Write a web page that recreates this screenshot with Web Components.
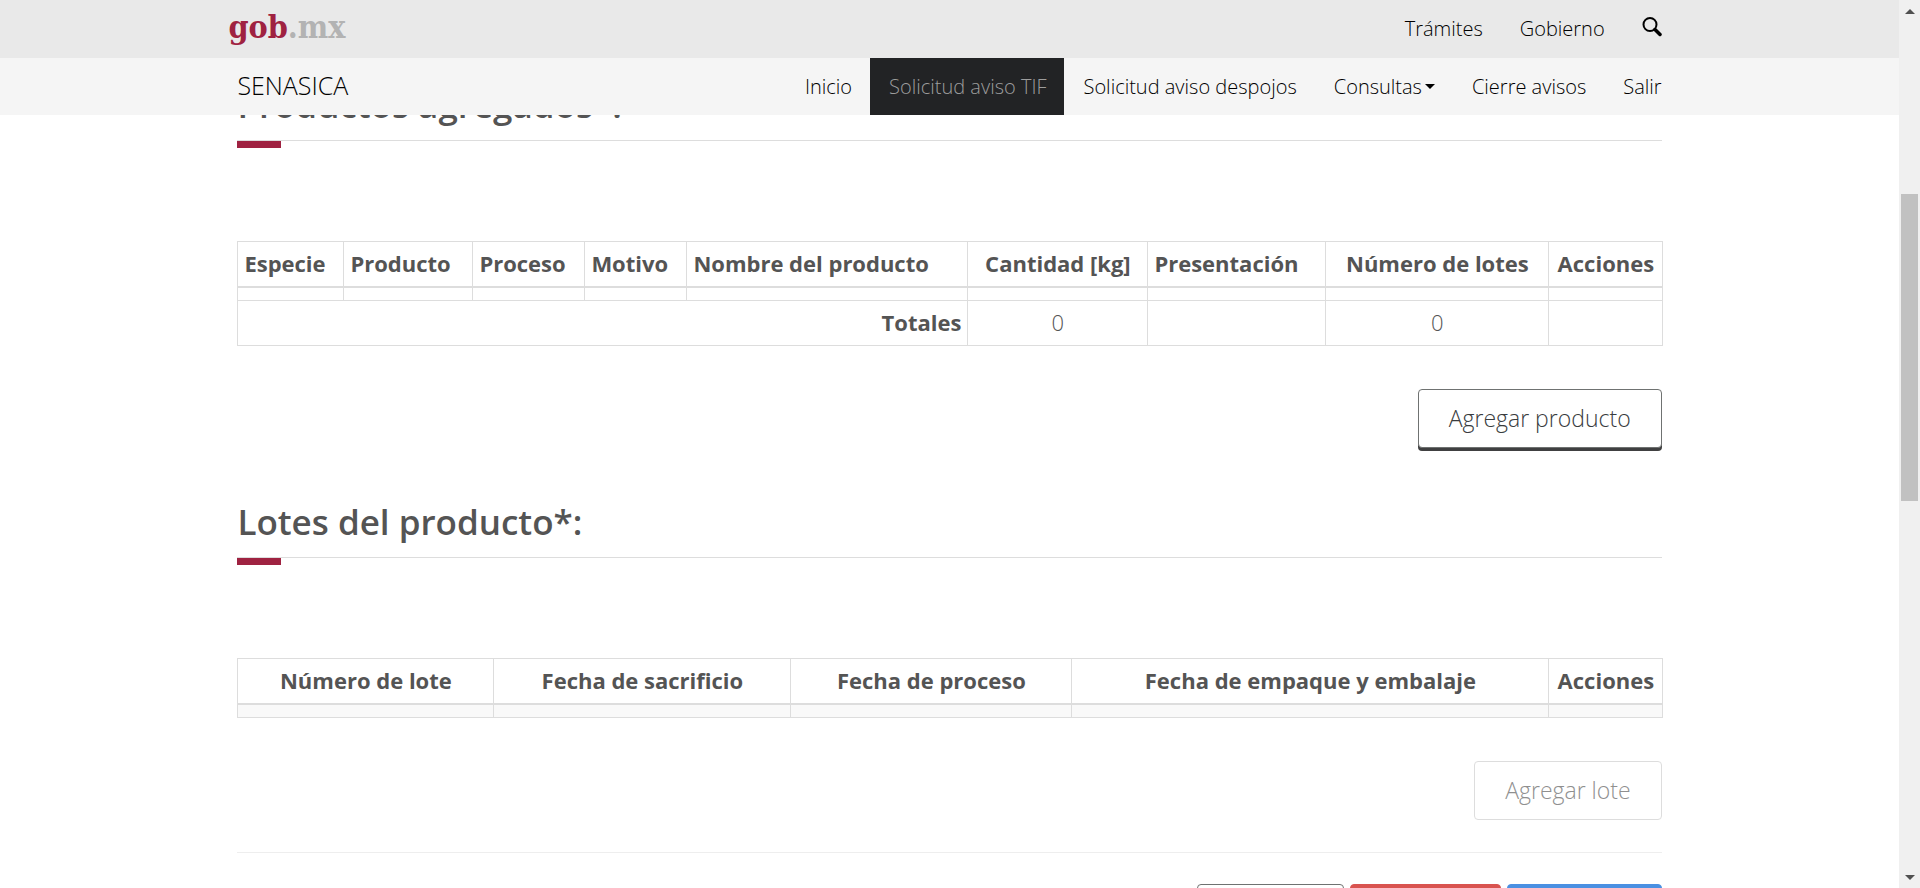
<!DOCTYPE html>
<html lang="es">
<head>
<meta charset="utf-8">
<title>SENASICA - Solicitud aviso TIF</title>
<style>
  html, body { margin: 0; height: 100%; overflow: hidden; }
  body { font-family: "Open Sans", sans-serif; font-weight: 300; font-size: 22px; line-height: 32px; color: #545454; background: #fff; }
</style>
</head>
<body>
<tif-app></tif-app>
<script>
const define = (name, html, connected) => {
  const template = document.createElement('template');
  template.innerHTML = html;
  customElements.define(name, class extends HTMLElement {
    constructor() {
      super();
      this.attachShadow({ mode: 'open' }).appendChild(template.content.cloneNode(true));
    }
    connectedCallback() {
      if (connected) connected(this, this.shadowRoot);
    }
  });
};

/* Centred column shared by the bars and the content */
define('tif-container', `
<style>
  :host { display: block; box-sizing: border-box; width: 75%; min-width: 1200px; max-width: 1425px; margin: 0 auto; }
</style>
<slot></slot>`);

define('gob-bar', `
<style>
  :host { display: block; background: #e9e9e9; color: #000; font-size: 20px; }
  .row { display: flex; align-items: center; justify-content: space-between; height: 58px; }
  a { color: inherit; text-decoration: none; }
  .logo { font: bold 32px/40px "DejaVu Serif Condensed", "DejaVu Serif", serif; color: #b3b3b3; margin-left: -9px; padding-bottom: 4px; }
  .logo b { color: #9f2241; }
  nav { display: flex; align-items: center; gap: 37px; }
  svg { display: block; width: 20px; height: 20px; margin-bottom: 4px; }
</style>
<tif-container><div class="row">
  <a class="logo" href="#"><b>gob</b>.mx</a>
  <nav>
    <a href="#">Trámites</a>
    <a href="#">Gobierno</a>
    <a href="#" aria-label="Buscar"><svg viewBox="0 0 20 20" fill="none" stroke="#000"><circle cx="8" cy="7.500" r="6.500" stroke-width="2"/><path d="M13 12.500 18 17.500" stroke-width="3.500" stroke-linecap="round"/></svg></a>
  </nav>
</div></tif-container>`);

define('nav-item', `
<style>
  :host { display: block; }
  a { display: flex; align-items: center; height: 57px; padding: 0 18px 0 19px; color: #000; text-decoration: none; }
  :host([active]) a { background: #222325; color: #9d9d9d; }
  i { display: none; margin-left: 3px; border: 5px solid transparent; border-top-color: #000; border-bottom: 0; }
  :host([dropdown]) i { display: block; }
</style>
<a href="#"><slot></slot><i></i></a>`);

define('tif-nav', `
<style>
  :host { display: block; background: #f5f5f5; color: #000; font-size: 20px; }
  .row { display: flex; align-items: center; justify-content: space-between; height: 57px; }
  .brand { font-size: 25px; padding-bottom: 4px; color: inherit; text-decoration: none; }
  nav { display: flex; margin-right: -18px; }
</style>
<tif-container><div class="row">
  <a class="brand" href="#">SENASICA</a>
  <nav>
    <nav-item>Inicio</nav-item>
    <nav-item active>Solicitud aviso TIF</nav-item>
    <nav-item>Solicitud aviso despojos</nav-item>
    <nav-item dropdown>Consultas</nav-item>
    <nav-item>Cierre avisos</nav-item>
    <nav-item>Salir</nav-item>
  </nav>
</div></tif-container>`);

define('section-title', `
<style>
  :host { display: block; }
  h3 { margin: 0; padding-bottom: 15px; border-bottom: 1px solid #ddd; font-size: 35px; line-height: 40px; font-weight: 600; }
  div { width: 44px; height: 7px; background: #9f2241; }
</style>
<h3><slot></slot></h3><div></div>`);

define('tif-button', `
<style>
  :host { display: block; }
  button { display: block; box-sizing: border-box; width: 100%; min-height: 59px; padding: 0 30px 2px; border: 1px solid #6f7271; border-radius: 4px; background: #fff; color: #393c3e; font: inherit; font-size: 23px; line-height: 32px; box-shadow: 0 3px 0 #404041; }
  button:disabled { opacity: .65; border-color: #ccc; color: #545454; box-shadow: none; }
  :host([kind=danger]) button { background: #d9534f; border-color: #d9534f; box-shadow: none; }
  :host([kind=primary]) button { background: #4a90e2; border-color: #4a90e2; box-shadow: none; }
</style>
<button type="button"><slot></slot></button>`, (host, root) => {
  const button = root.querySelector('button');
  button.disabled = host.hasAttribute('disabled');
  if (host.hasAttribute('label')) button.setAttribute('aria-label', host.getAttribute('label'));
});

const tableStyle = `
  :host { display: block; }
  table { width: 100%; table-layout: fixed; border-collapse: collapse; }
  th, td { box-sizing: border-box; border: 1px solid #ddd; padding: 5px 6px 7px; text-align: center; white-space: nowrap; }
  th { font-weight: 700; }
  thead th { border-bottom-width: 2px; }
  .left { text-align: left; }
  .right { text-align: right; }`;

define('product-table', `
<style>${tableStyle}</style>
<table>
  <colgroup><col style="width:106px"><col style="width:129px"><col style="width:112px"><col style="width:102px"><col style="width:281px"><col style="width:180px"><col style="width:178px"><col style="width:223px"><col style="width:114px"></colgroup>
  <thead><tr><th class="left">Especie</th><th class="left">Producto</th><th class="left">Proceso</th><th class="left">Motivo</th><th class="left">Nombre del producto</th><th>Cantidad [kg]</th><th class="left">Presentación</th><th>Número de lotes</th><th>Acciones</th></tr></thead>
  <tbody><tr><td></td><td></td><td></td><td></td><td></td><td></td><td></td><td></td><td></td></tr></tbody>
  <tfoot><tr><th class="right" colspan="5">Totales</th><td>0</td><td></td><td>0</td><td></td></tr></tfoot>
</table>`);

define('lot-table', `
<style>${tableStyle} tbody { background: #f9f9f9; }</style>
<table>
  <colgroup><col style="width:256px"><col style="width:297px"><col style="width:281px"><col style="width:477px"><col style="width:114px"></colgroup>
  <thead><tr><th>Número de lote</th><th>Fecha de sacrificio</th><th>Fecha de proceso</th><th>Fecha de empaque y embalaje</th><th>Acciones</th></tr></thead>
  <tbody><tr><td></td><td></td><td></td><td></td><td></td></tr></tbody>
</table>`);

define('page-scrollbar', `
<style>
  :host { display: grid; grid-template-rows: 22px 172fr 307fr 365fr 22px; background: #f0f0f0; }
  i { place-self: center; border: 5px solid transparent; }
  .up { border-bottom-color: #505050; border-top: 0; }
  .down { border-top-color: #505050; border-bottom: 0; grid-row: 5; }
  .thumb { grid-row: 3; margin: 0 2px; background: #c1c1c1; }
</style>
<i class="up"></i><div class="thumb"></div><i class="down"></i>`);

define('tif-app', `
<style>
  :host { display: grid; grid-template-columns: 1fr 21px; height: 100vh; }
  .page { display: flex; flex-direction: column; min-width: 0; min-height: 0; }
  header { flex: none; }
  main { flex: 1; min-height: 0; overflow: hidden; }
  /* The page is scrolled: the first title is partly under the bars */
  .first { margin-top: -30px; }
  .table { margin-top: 93px; }
  .actions { display: flex; justify-content: flex-end; gap: 6px; margin-top: 43px; }
  .second { margin-top: 54px; }
  hr { margin: 32px 0 31px; border: 0; border-top: 1px solid #eee; }
  .end { margin-top: 0; }
</style>
<div class="page">
  <header><gob-bar></gob-bar><tif-nav></tif-nav></header>
  <main><tif-container>
    <section-title class="first">Productos agregados*:</section-title>
    <product-table class="table"></product-table>
    <div class="actions"><tif-button>Agregar producto</tif-button></div>
    <section-title class="second">Lotes del producto*:</section-title>
    <lot-table class="table"></lot-table>
    <div class="actions"><tif-button disabled>Agregar lote</tif-button></div>
    <hr>
    <div class="actions end">
      <tif-button label="Limpiar" style="width:147px"></tif-button>
      <tif-button label="Cancelar" kind="danger" style="width:151px"></tif-button>
      <tif-button label="Guardar" kind="primary" style="width:155px"></tif-button>
    </div>
  </tif-container></main>
</div>
<page-scrollbar></page-scrollbar>`);
</script>
</body>
</html>
